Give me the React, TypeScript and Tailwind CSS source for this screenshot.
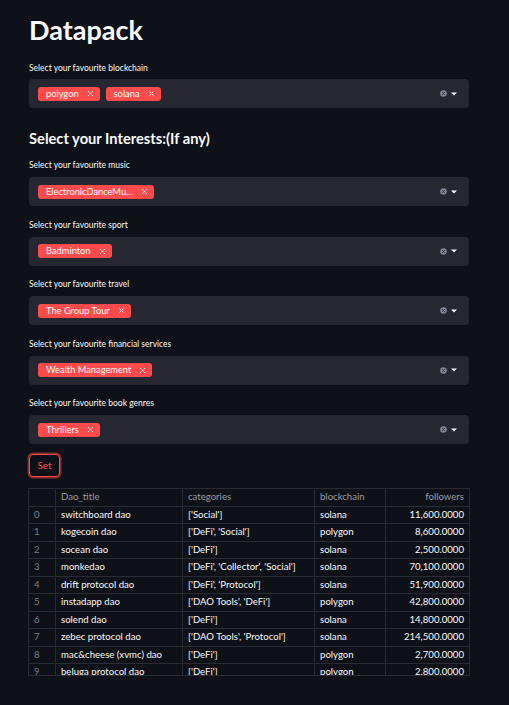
import React from "react";

const font = { fontFamily: "Lato, 'Noto Sans', sans-serif" };

function Tag({ label }: { label: string }) {
  return (
    <div className="flex h-[14px] items-center rounded-[3px] bg-[#ff4b4b] pl-[8px] pr-[6px] text-[9.3px] text-white">
      <span className="leading-none">{label}</span>
      <svg className="ml-[8px]" width="7" height="7" viewBox="0 0 7 7">
        <path d="M1 1 L6 6 M6 1 L1 6" stroke="#ffffff" strokeWidth="1" strokeOpacity="0.85" />
      </svg>
    </div>
  );
}

function Field({ label, tags, gap = 6 }: { label: string; tags: string[]; gap?: number }) {
  return (
    <div className="flex flex-col">
      <div className="h-[12px] text-[8.5px] leading-[12px] text-[#fafafa]">{label}</div>
      <div
        className={`${gap === 5 ? "mt-[5px]" : "mt-[6px]"} flex h-[29px] items-center rounded-[4px] bg-[#262730] pl-[9px] pr-[12px]`}
      >
        <div className="flex flex-1 items-center gap-[6px]">
          {tags.map((t) => (
            <Tag key={t} label={t} />
          ))}
        </div>
        <svg width="7" height="7" viewBox="0 0 7 7">
          <circle cx="3.5" cy="3.5" r="3.3" fill="#808495" />
          <path d="M2.2 2.2 L4.8 4.8 M4.8 2.2 L2.2 4.8" stroke="#262730" strokeWidth="0.9" />
        </svg>
        <svg className="ml-[4px]" width="6" height="4" viewBox="0 0 6 4">
          <path d="M0 0.5 L6 0.5 L3 3.5 Z" fill="#fafafa" />
        </svg>
      </div>
    </div>
  );
}

const rows: [string, string, string, string][] = [
  ["switchboard dao", "['Social']", "solana", "11,600.0000"],
  ["kogecoin dao", "['DeFi', 'Social']", "polygon", "8,600.0000"],
  ["socean dao", "['DeFi']", "solana", "2,500.0000"],
  ["monkedao", "['DeFi', 'Collector', 'Social']", "solana", "70,100.0000"],
  ["drift protocol dao", "['DeFi', 'Protocol']", "solana", "51,900.0000"],
  ["instadapp dao", "['DAO Tools', 'DeFi']", "polygon", "42,800.0000"],
  ["solend dao", "['DeFi']", "solana", "14,800.0000"],
  ["zebec protocol dao", "['DAO Tools', 'Protocol']", "solana", "214,500.0000"],
  ["mac&cheese (xvmc) dao", "['DeFi']", "polygon", "2,700.0000"],
  ["beluga protocol dao", "['DeFi']", "polygon", "2,800.0000"],
];

function Table() {
  const cell = "border-r border-b border-[#2a2c33] px-[5px] overflow-hidden whitespace-nowrap";
  return (
    <div className="h-[188px] w-[442px] overflow-hidden border border-[#2a2c33] text-[9.6px]">
      <div className="grid grid-cols-[27px_127px_132px_71px_83px]">
        <div className={`${cell} h-[18px]`}></div>
        <div className={`${cell} flex h-[18px] items-center text-[#9a9ca3]`}>Dao_title</div>
        <div className={`${cell} flex h-[18px] items-center text-[#9a9ca3]`}>categories</div>
        <div className={`${cell} flex h-[18px] items-center text-[#9a9ca3]`}>blockchain</div>
        <div className={`${cell} flex h-[18px] items-center justify-end border-r-0 text-[#9a9ca3]`}>followers</div>
        {rows.map((r, i) => (
          <React.Fragment key={i}>
            <div className={`${cell} flex h-[17.45px] items-center text-[#7d7f86]`}>{i}</div>
            <div className={`${cell} flex h-[17.45px] items-center text-[#fafafa]`}>{r[0]}</div>
            <div className={`${cell} flex h-[17.45px] items-center text-[#fafafa]`}>{r[1]}</div>
            <div className={`${cell} flex h-[17.45px] items-center text-[#fafafa]`}>{r[2]}</div>
            <div className={`${cell} flex h-[17.45px] items-center justify-end border-r-0 text-[#fafafa]`}>{r[3]}</div>
          </React.Fragment>
        ))}
      </div>
    </div>
  );
}

export default function App() {
  return (
    <div className="min-h-[705px] w-full bg-[#0e1117]" style={font}>
      <div className="flex w-[469px] flex-col pl-[29px] pt-[14px]">
        <h1 className="h-[32px] text-[27px] font-bold leading-[32px] text-[#fafafa]">Datapack</h1>
        <div className="mt-[16px]">
          <Field label="Select your favourite blockchain" tags={["polygon", "solana"]} gap={5} />
        </div>
        <h3 className="mt-[17.5px] h-[24px] text-[14.7px] font-bold leading-[24px] text-[#fafafa]">
          Select your Interests:(If any)
        </h3>
        <div className="mt-[9.5px] flex flex-col gap-[12.5px]">
          <Field label="Select your favourite music" tags={["ElectronicDanceMu..."]} />
          <Field label="Select your favourite sport" tags={["Badminton"]} />
          <Field label="Select your favourite travel" tags={["The Group Tour"]} />
          <Field label="Select your favourite financial services" tags={["Wealth Management"]} />
          <Field label="Select your favourite book genres" tags={["Thrillers"]} />
        </div>
        <div className="mt-[10px]">
          <button className="flex h-[23px] w-[31px] items-center justify-center rounded-[4px] border border-[#ff4b4b] text-[10px] text-[#ff4b4b] shadow-[0_0_0_1.5px_rgba(255,75,75,0.5)]">
            Set
          </button>
        </div>
        <div className="mt-[11px] -ml-[1px]">
          <Table />
        </div>
      </div>
    </div>
  );
}
